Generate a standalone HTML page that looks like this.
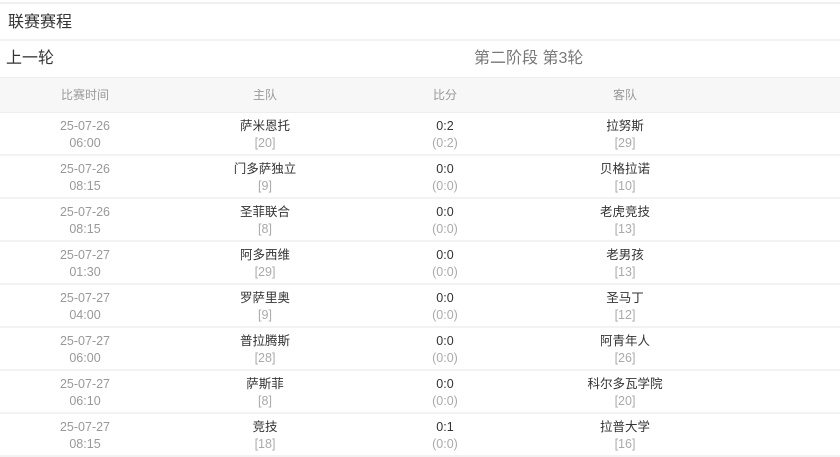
<!DOCTYPE html>
<html><head><meta charset="utf-8"><style>
*{margin:0;padding:0;box-sizing:border-box}
body{width:840px;height:456px;overflow:hidden;background:#fff;font-family:"Liberation Sans","Noto Sans CJK SC",sans-serif;}
.top{height:4px;border-bottom:2px solid #f0f0f0;}
.t1{height:37px;line-height:37px;padding-left:8px;font-size:16px;color:#333;border-bottom:2px solid #f2f2f2;}
.t2{height:37px;line-height:36px;position:relative;font-size:16px;color:#333;border-bottom:1px solid #eee;}
.t2 .l{position:absolute;left:6px}
.t2 .c{position:absolute;left:474px;color:#777}
.hd{height:35px;background:#f7f7f7;display:flex;border-bottom:1px solid #eee;padding-left:0}
.hd div,.r div{width:180px;text-align:center;font-size:12px;color:#999}
.hd div:first-child,.r div:first-child{margin-left:-5px}
.hd div{line-height:34px}
.r{height:43px;display:flex;border-bottom:2px solid #f2f2f2;padding-top:5px}
.r div{line-height:17px;font-size:12.5px}
.r span{display:block}
.k{color:#333}
.g{color:#aaa}
</style></head><body>
<div class="top"></div>
<div class="t1">联赛赛程</div>
<div class="t2"><span class="l">上一轮</span><span class="c">第二阶段 第3轮</span></div>
<div class="hd"><div>比赛时间</div><div>主队</div><div>比分</div><div>客队</div></div>
<div class="r"><div class="g">25-07-26<br>06:00</div><div><span class="k">萨米恩托</span><span class="g">[20]</span></div><div><span class="k">0:2</span><span class="g">(0:2)</span></div><div><span class="k">拉努斯</span><span class="g">[29]</span></div></div>
<div class="r"><div class="g">25-07-26<br>08:15</div><div><span class="k">门多萨独立</span><span class="g">[9]</span></div><div><span class="k">0:0</span><span class="g">(0:0)</span></div><div><span class="k">贝格拉诺</span><span class="g">[10]</span></div></div>
<div class="r"><div class="g">25-07-26<br>08:15</div><div><span class="k">圣菲联合</span><span class="g">[8]</span></div><div><span class="k">0:0</span><span class="g">(0:0)</span></div><div><span class="k">老虎竞技</span><span class="g">[13]</span></div></div>
<div class="r"><div class="g">25-07-27<br>01:30</div><div><span class="k">阿多西维</span><span class="g">[29]</span></div><div><span class="k">0:0</span><span class="g">(0:0)</span></div><div><span class="k">老男孩</span><span class="g">[13]</span></div></div>
<div class="r"><div class="g">25-07-27<br>04:00</div><div><span class="k">罗萨里奥</span><span class="g">[9]</span></div><div><span class="k">0:0</span><span class="g">(0:0)</span></div><div><span class="k">圣马丁</span><span class="g">[12]</span></div></div>
<div class="r"><div class="g">25-07-27<br>06:00</div><div><span class="k">普拉腾斯</span><span class="g">[28]</span></div><div><span class="k">0:0</span><span class="g">(0:0)</span></div><div><span class="k">阿青年人</span><span class="g">[26]</span></div></div>
<div class="r"><div class="g">25-07-27<br>06:10</div><div><span class="k">萨斯菲</span><span class="g">[8]</span></div><div><span class="k">0:0</span><span class="g">(0:0)</span></div><div><span class="k">科尔多瓦学院</span><span class="g">[20]</span></div></div>
<div class="r"><div class="g">25-07-27<br>08:15</div><div><span class="k">竞技</span><span class="g">[18]</span></div><div><span class="k">0:1</span><span class="g">(0:0)</span></div><div><span class="k">拉普大学</span><span class="g">[16]</span></div></div>
</body></html>
